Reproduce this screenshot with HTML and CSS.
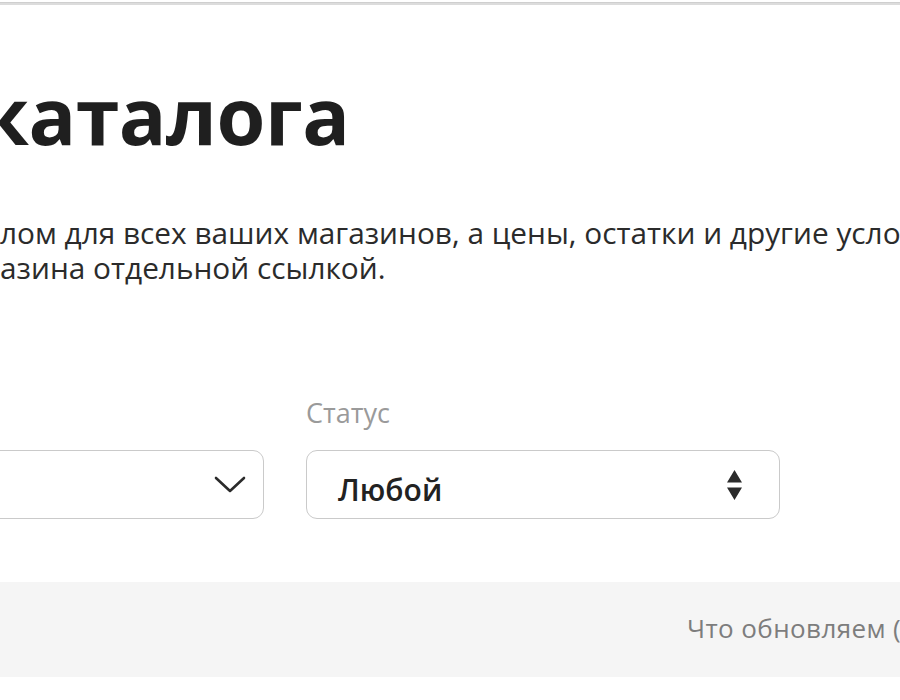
FILE: index.html
```
<!DOCTYPE html>
<html lang="ru">
<head>
<meta charset="utf-8">
<title>Каталог</title>
<link rel="stylesheet" href="styles.css">
</head>
<body>
<div class="topline"></div>
<main class="content">
  <h1 class="title">каталога</h1>
  <p class="lead">лом для всех ваших магазинов, а цены, остатки и другие условия<br>азина отдельной ссылкой.</p>
  <div class="filters">
    <div class="field field-first">
      <div class="label">&nbsp;</div>
      <div class="select select-chevron">
        <span class="value"></span>
        <svg class="chev" width="32" height="17" viewBox="0 0 32 17"><path d="M2 2 L16 15 L30 2" fill="none" stroke="#2b2b2b" stroke-width="2.6" stroke-linecap="round" stroke-linejoin="round"/></svg>
      </div>
    </div>
    <div class="field">
      <div class="label">Статус</div>
      <div class="select">
        <span class="value">Любой</span>
        <svg class="updown" width="15" height="30" viewBox="0 0 15 30"><path d="M7.5 0 L15 12.5 L0 12.5 Z M0 17.5 L15 17.5 L7.5 30 Z" fill="#2b2b2b"/></svg>
      </div>
    </div>
  </div>
</main>
<footer class="footer">
  <span class="footer-text">Что обновляем (обновлено сегодня)</span>
</footer>
</body>
</html>
```
FILE: styles.css
```
html, body {
  margin: 0;
  padding: 0;
  background: #fff;
  overflow: hidden;
  width: 900px;
  height: 700px;
}
body {
  font-family: "Open Sans", "Noto Sans", sans-serif;
  color: #222;
}
.topline {
  margin-top: 2px;
  height: 3px;
  background: #dcdcdc;
  border-top: 1px solid #cfcfcf;
  box-sizing: border-box;
}
.content {
  padding-top: 63px;
}
.title {
  margin: 0 0 0 -20px;
  font-size: 79px;
  line-height: 94px;
  font-weight: 700;
  color: #1f1f1f;
  white-space: nowrap;
  letter-spacing: -0.5px;
}
.lead {
  margin: 53px 0 0 0;
  font-size: 29.8px;
  line-height: 35px;
  color: #2b2b2b;
  white-space: nowrap;
}
.filters {
  display: flex;
  gap: 42px;
  margin-top: 112px;
}
.field {
  display: flex;
  flex-direction: column;
  gap: 21px;
}
.field-first {
  margin-left: -210px;
}
.label {
  font-size: 27px;
  line-height: 32px;
  color: #9a9a9a;
}
.select {
  box-sizing: border-box;
  width: 474px;
  height: 69px;
  border: 1.5px solid #cacaca;
  border-radius: 11px;
  display: flex;
  align-items: center;
  justify-content: space-between;
  padding: 0 37px 0 31px;
}
.select-chevron {
  padding-right: 17px;
}
.value {
  margin-top: 11px;
  font-size: 30px;
  line-height: 36px;
  font-weight: 600;
  color: #222;
}
.footer {
  margin-top: 63px;
  height: 95px;
  background: #f5f5f5;
  box-sizing: border-box;
  padding: 30px 0 0 687px;
  white-space: nowrap;
}
.footer-text {
  font-size: 26px;
  line-height: 32px;
  color: #7d7d7d;
  letter-spacing: 0.4px;
}
```
